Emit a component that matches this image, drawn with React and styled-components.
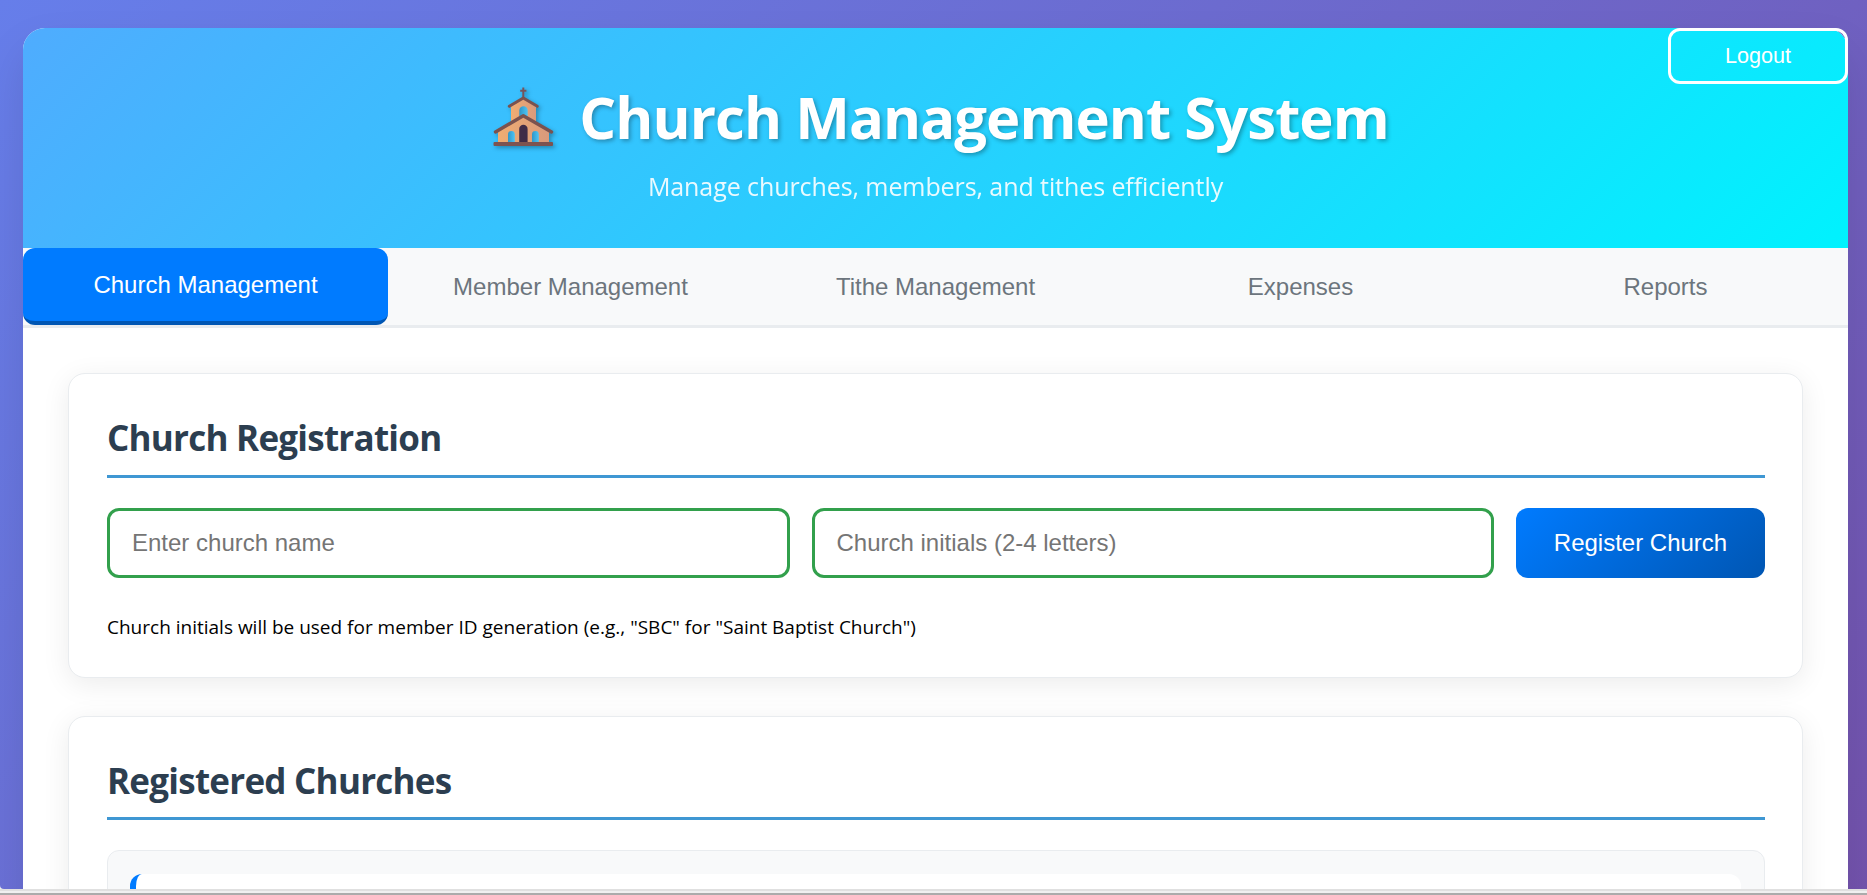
import React from "react";
import styled, { createGlobalStyle } from "styled-components";

const ui = '"Open Sans", "Noto Sans", sans-serif';
const control = '"Liberation Sans", Arial, sans-serif';

const GlobalStyle = createGlobalStyle`
  * { box-sizing: border-box; margin: 0; padding: 0; }
  body { margin: 0; overflow: hidden; font-family: ${ui}; }
`;

const Window = styled.div`
  height: 895px;
  display: flex;
  flex-direction: column;
  background: #f0f0f0;
`;

const Page = styled.div`
  height: 889px;
  flex: none;
  overflow: hidden;
  padding: 28px 19px 0 23px;
  border-bottom-left-radius: 4px;
  background: linear-gradient(135deg, #667eea 0%, #764ba2 100%) 0 0 / 100% 1400px no-repeat;
`;

const WindowEdge = styled.div`
  height: 6px;
  background: #f0f0f0;
  border-top: 2px solid #e0e0e0;
  border-bottom: 2px solid #ababab;
`;

const Container = styled.main`
  height: 1300px;
  background: #fff;
  border-radius: 22px;
  box-shadow: 0 22px 45px rgba(0, 0, 0, 0.1);
`;

const Header = styled.header`
  position: relative;
  height: 220px;
  padding-top: 44px;
  display: flex;
  flex-direction: column;
  align-items: center;
  color: #fff;
  border-radius: 22px 22px 0 0;
  background: linear-gradient(135deg, #4facfe 0%, #00f2fe 100%);
`;

const LogoutButton = styled.button`
  position: absolute;
  top: 0;
  right: 0;
  width: 180px;
  height: 56px;
  border: 3px solid #fff;
  border-radius: 12px;
  background: transparent;
  color: #fff;
  font: 21.6px ${control};
`;

const TitleRow = styled.div`
  display: flex;
  align-items: center;
  gap: 24px;
  height: 90px;
  padding-left: 11px;
`;

const ChurchIcon = styled.svg`
  width: 62px;
  height: 62px;
  filter: drop-shadow(2px 2px 2px rgba(0, 0, 0, 0.3));
`;

const Title = styled.h1`
  font-size: 58px;
  line-height: 80px;
  font-weight: 700;
  white-space: nowrap;
  letter-spacing: -0.95px;
  text-shadow: 2px 2px 4px rgba(0, 0, 0, 0.3);
`;

const Subtitle = styled.p`
  font-size: 25px;
  line-height: 36px;
  margin-top: 6px;
  letter-spacing: -0.08px;
  opacity: 0.9;
  white-space: nowrap;
`;

const Nav = styled.nav`
  display: grid;
  grid-template-columns: repeat(5, 1fr);
  height: 80px;
  background: #f8f9fa;
  border-bottom: 3px solid #e9ecef;
`;

const Tab = styled.button`
  border: 0;
  border-bottom: ${(p) => (p.$active ? "4px solid #0056b3" : "0")};
  border-radius: 12px;
  background: ${(p) => (p.$active ? "#007bff" : "transparent")};
  color: ${(p) => (p.$active ? "#fff" : "#6c757d")};
  font: 24px ${control};
`;

const Content = styled.div`
  padding: 45px 45px 0;
  display: flex;
  flex-direction: column;
  gap: 38px;
`;

const Card = styled.section`
  height: ${(p) => p.$height}px;
  padding: 38px 37px 38px 38px;
  border: 1px solid #e9ecef;
  border-radius: 17px;
  background: #fff;
  box-shadow: 0 6px 28px rgba(0, 0, 0, 0.08);
`;

const CardTitle = styled.h2`
  height: ${(p) => p.$height}px;
  margin-bottom: 30px;
  border-bottom: 3px solid #3f97d3;
  color: #2c3e50;
  font-size: 35px;
  line-height: 52px;
  font-weight: 700;
  letter-spacing: -0.75px;
`;

const Form = styled.form`
  display: flex;
  gap: 22px;
  height: 70px;
`;

const Field = styled.input`
  flex: 1;
  min-width: 0;
  padding: 0 22px;
  border: 3px solid #32a04c;
  border-radius: 12px;
  background: #fff;
  font: 24px ${control};
  &::placeholder { color: #757575; }
`;

const SubmitButton = styled.button`
  width: 249px;
  border: 0;
  border-radius: 12px;
  color: #fff;
  font: 24px ${control};
  background: linear-gradient(135deg, #007bff, #0056b3);
`;

const Hint = styled.p`
  margin-top: 34px;
  color: #000;
  font-size: 19px;
  line-height: 30px;
`;

const List = styled.div`
  height: 300px;
  padding: 23px 23px 23px 22px;
  border: 1px solid #e9ecef;
  border-radius: 12px;
  background: #f8f9fa;
`;

const ListItem = styled.div`
  height: 120px;
  border-left: 6px solid #007bff;
  border-radius: 12px;
  background: #fff;
`;

const tabs = ["Church Management", "Member Management", "Tithe Management", "Expenses", "Reports"];

function Church() {
  return (
    <ChurchIcon viewBox="8 6 62 62">
      <defs>
        <linearGradient id="wall" x1="0" x2="1">
          <stop offset="0" stopColor="#f0ad72" />
          <stop offset="1" stopColor="#d99a7c" />
        </linearGradient>
        <linearGradient id="glass" x1="0" x2="1">
          <stop offset="0" stopColor="#2f96c8" />
          <stop offset="1" stopColor="#4cc4f5" />
        </linearGradient>
      </defs>
      <path d="M26 26 38.300 18 51 26V48H26Z" fill="url(#wall)" />
      <path d="M13 51 38.300 36 64 51V63H13Z" fill="url(#wall)" />
      <path d="M34.300 36V30.500A4.200 4.200 0 0 1 42.700 30.500V36Z" fill="url(#glass)" />
      <path d="M38.300 7.500V18M35.200 10.800H41.400" stroke="#75545d" strokeWidth="2" fill="none" />
      <path d="M24.300 26.300 38.300 18 52.300 26.300" stroke="#7a524f" strokeWidth="3" fill="none" strokeLinecap="round" strokeLinejoin="round" />
      <path d="M10.500 52 38.300 35.700 66.500 52" stroke="#7a524f" strokeWidth="3.400" fill="none" strokeLinecap="round" strokeLinejoin="round" />
      <path d="M23 62V54.500A3.400 3.400 0 0 1 29.800 54.500V62Z" fill="url(#glass)" />
      <path d="M47 62V54.500A3.400 3.400 0 0 1 53.800 54.500V62Z" fill="url(#glass)" />
      <path d="M34.200 62V49A4.200 4.200 0 0 1 42.600 49V62Z" fill="#402c47" />
      <rect x="8.500" y="62" width="59.500" height="4" rx="1" fill="#7d5350" />
    </ChurchIcon>
  );
}

export default function App() {
  return (
    <Window>
      <GlobalStyle />
      <Page>
        <Container>
          <Header>
            <LogoutButton>Logout</LogoutButton>
            <TitleRow>
              <Church />
              <Title>Church Management System</Title>
            </TitleRow>
            <Subtitle>Manage churches, members, and tithes efficiently</Subtitle>
          </Header>
          <Nav>
            {tabs.map((label, i) => (
              <Tab key={label} $active={i === 0}>{label}</Tab>
            ))}
          </Nav>
          <Content>
            <Card $height={305}>
              <CardTitle $height={66}>Church Registration</CardTitle>
              <Form>
                <Field placeholder="Enter church name" />
                <Field placeholder="Church initials (2-4 letters)" />
                <SubmitButton type="button">Register Church</SubmitButton>
              </Form>
              <Hint>Church initials will be used for member ID generation (e.g., "SBC" for "Saint Baptist Church")</Hint>
            </Card>
            <Card $height={420}>
              <CardTitle $height={65}>Registered Churches</CardTitle>
              <List>
                <ListItem />
              </List>
            </Card>
          </Content>
        </Container>
      </Page>
      <WindowEdge />
    </Window>
  );
}
